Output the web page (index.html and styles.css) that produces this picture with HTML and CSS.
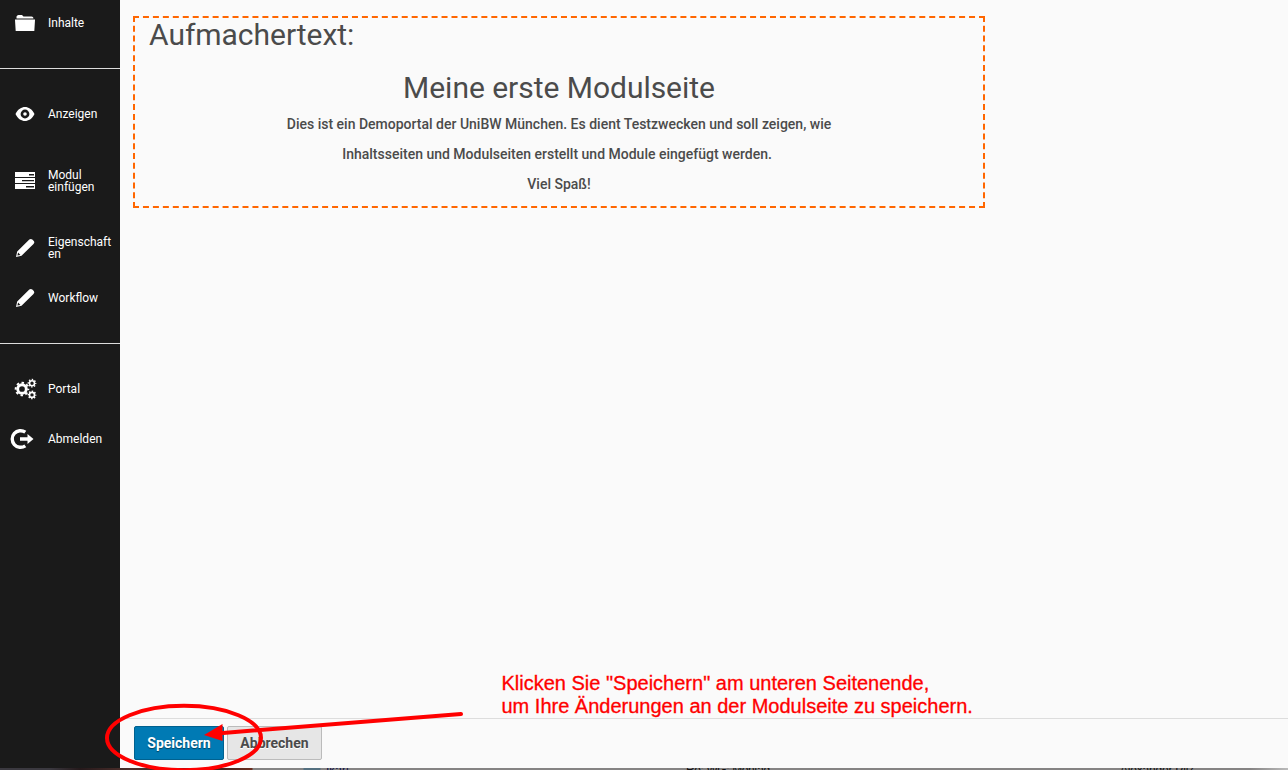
FILE: index.html
```
<!DOCTYPE html>
<html lang="de">
<head>
<meta charset="utf-8">
<title>Modulseite bearbeiten</title>
<link rel="stylesheet" href="styles.css">
</head>
<body>
<div class="app">
  <nav class="sidebar">
    <div class="group group-top">
      <a class="item"><svg class="icon" viewBox="0 0 24 24"><path d="M3.500 7.500V5.500Q4 4 5.500 4H9L10.500 5.500H18.500Q20.500 5.500 20.500 7.500Z"/><path d="M2 8.400H22L21.300 20H2.700Z"/></svg><span>Inhalte</span></a>
    </div>
    <div class="group group-page">
      <a class="item"><svg class="icon" viewBox="0 0 24 24"><path fill-rule="evenodd" d="M2.500 12C5 7 8.500 5 12 5S19 7 21.500 12C19 17 15.500 19 12 19S5 17 2.500 12ZM12 7.600A4.400 4.400 0 1 0 12 16.400A4.400 4.400 0 1 0 12 7.600ZM12 10.200A1.800 1.800 0 1 1 12 13.800A1.800 1.800 0 1 1 12 10.200Z"/></svg><span>Anzeigen</span></a>
      <a class="item item-module"><svg class="icon" viewBox="0 0 24 24"><path fill-rule="evenodd" d="M2 3H22V8H2ZM16 5V6.400H21V5ZM2 9H22V14H2ZM9 10.900V12.300H21V10.900ZM2 15H22V20H2ZM13 17V18.400H21V17Z"/></svg><span>Modul<br>einfügen</span></a>
      <a class="item item-props"><svg class="icon" viewBox="0 0 24 24"><path fill-rule="evenodd" d="M3 21L4.200 15.500L16.300 3.600Q17.800 2.200 19.300 3.600L20.800 5.100Q22 6.500 20.500 8L8.500 19.800ZM4.400 19.600L7.400 18.900L5.100 16.600Z"/></svg><span>Eigenschaft<br>en</span></a>
      <a class="item"><svg class="icon" viewBox="0 0 24 24"><path fill-rule="evenodd" d="M3 21L4.200 15.500L16.300 3.600Q17.800 2.200 19.300 3.600L20.800 5.100Q22 6.500 20.500 8L8.500 19.800ZM4.400 19.600L7.400 18.900L5.100 16.600Z"/></svg><span>Workflow</span></a>
    </div>
    <div class="group group-portal">
      <a class="item"><svg class="icon" viewBox="0 0 24 24"><g fill="none" stroke="#fff"><circle cx="9" cy="12" r="4.300" stroke-width="2.900"/><circle cx="9" cy="12" r="6.300" stroke-width="2" stroke-dasharray="2.474" stroke-dashoffset="1.237"/><circle cx="19" cy="6.200" r="2.500" stroke-width="1.600"/><circle cx="19" cy="6.200" r="3.700" stroke-width="1.400" stroke-dasharray="1.453" stroke-dashoffset=".72"/><circle cx="19" cy="17.900" r="2.500" stroke-width="1.600"/><circle cx="19" cy="17.900" r="3.700" stroke-width="1.400" stroke-dasharray="1.453" stroke-dashoffset=".72"/></g></svg><span>Portal</span></a>
      <a class="item item-logout"><svg class="icon" viewBox="0 0 24 24"><path fill="none" stroke="#fff" stroke-width="3.400" d="M15.300 5.200A8.300 8.300 0 1 0 15.300 18.800"/><path d="M10 10.300H17.500V7L23.500 12L17.500 17V13.700H10Z"/></svg><span>Abmelden</span></a>
    </div>
  </nav>
  <main class="main">
    <section class="teaser">
      <h1 class="label">Aufmachertext:</h1>
      <h1 class="title">Meine erste Modulseite</h1>
      <p class="copy">Dies ist ein Demoportal der UniBW München. Es dient Testzwecken und soll zeigen, wie</p>
      <p class="copy copy-second">Inhaltsseiten und Modulseiten erstellt und Module eingefügt werden.</p>
      <p class="copy">Viel Spaß!</p>
    </section>
    <footer class="actions">
      <button class="button primary">Speichern</button>
      <button class="button">Abbrechen</button>
    </footer>
  </main>
</div>
<div class="backdrop"><span class="back-one">Ikarl</span><span class="back-two">Re: WG: Montag</span><span class="back-three">Alexander Pilz</span></div>
<p class="hint">Klicken Sie "Speichern" am unteren Seitenende,<br>um Ihre Änderungen an der Modulseite zu speichern.</p>
<svg class="marker" viewBox="0 0 1288 770"><ellipse cx="184" cy="738" rx="77" ry="32.200" fill="none" stroke="#f00" stroke-width="4"/><path d="M220 733.200L461 714" stroke="#f00" stroke-width="4" stroke-linecap="round"/><path d="M204 735L222.500 724V741Z" fill="#f00"/></svg>
</body>
</html>
```
FILE: styles.css
```
* { box-sizing: border-box; }
body { margin: 0; height: 770px; overflow: hidden; position: relative; font-family: Roboto, sans-serif; background: #fafafa; color: #4b4b4b; }
.app { display: grid; grid-template-columns: 120px 1fr; height: 768px; }
.sidebar { background: #1a1a1a; color: #fff; }
.group-top { height: 69px; padding-top: 8px; border-bottom: 1px solid #ddd; }
.group-page { height: 275px; padding-top: 30px; border-bottom: 1px solid #ddd; }
.group-portal { padding-top: 30px; }
.item { display: flex; align-items: center; height: 30px; padding-left: 13px; gap: 11px; font-size: 12px; line-height: 12px; margin-bottom: 20px; }
.item-module { margin-top: 37px; margin-bottom: 37px; }
.item-logout { padding-left: 10px; gap: 14px; }
.icon { width: 24px; height: 24px; flex: none; fill: #fff; overflow: visible; }
.main { display: flex; flex-direction: column; justify-content: space-between; padding-top: 16px; }
.teaser { width: 852px; height: 192px; margin-left: 13px; padding: 0 14px; border: 2px dashed #f60; }
.label, .title { margin: 0; font-size: 30px; line-height: 34px; font-weight: 400; letter-spacing: -0.03px; }
.title { text-align: center; margin-top: 19px; margin-bottom: 4px; }
.copy { margin: 0; text-align: center; font-size: 14px; line-height: 30px; font-weight: 500; white-space: pre; }
.copy-second { padding-right: 4px; }
.actions { height: 50px; padding: 7px 14px; border-top: 1px solid #ddd; display: flex; gap: 3px; }
.button { height: 34px; width: 95px; padding: 0; border: 1px solid #bbb; border-radius: 2px; background: #e6e6e6; color: #4b4b4b; font: 700 14px Roboto, sans-serif; text-shadow: 0 1px 0 #fff; }
.primary { width: 90px; background: #007ab4; border-color: #00618f; color: #fff; text-shadow: 0 1px 1px #00415f; }
.backdrop { height: 2px; overflow: hidden; position: relative; background: linear-gradient(90deg, #3b3940 0 50px, #25191b 80px, #4f302c 130px, #292022 200px, #6c2e20 252px, #858484 253px 303px, #547080 304px 320px, #858383 321px 1250px, #bbb); font: 12px/14px "Liberation Sans", sans-serif; color: #111; }
.backdrop span { position: absolute; top: -5px; white-space: nowrap; }
.back-one { left: 326px; color: #101044; }
.back-two { left: 686px; letter-spacing: -0.4px; }
.back-three { left: 1120px; letter-spacing: -0.2px; }
.hint { position: absolute; left: 501.500px; top: 672px; margin: 0; font: 20px/23px "Liberation Sans", sans-serif; color: #f00; -webkit-text-stroke: 0.3px #f00; white-space: nowrap; }
.marker { position: absolute; inset: 0; width: 1288px; height: 770px; pointer-events: none; }
```
